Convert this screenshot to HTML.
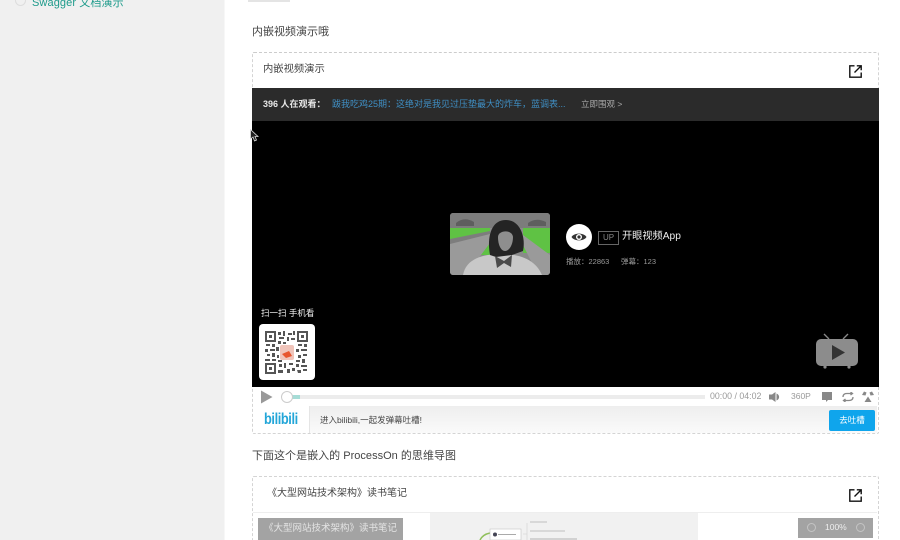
<!DOCTYPE html>
<html lang="zh">
<head>
<meta charset="utf-8">
<style>
html,body{margin:0;padding:0;background:#fff}
#p{position:relative;width:900px;height:540px;overflow:hidden;background:#fff;font-family:"Liberation Sans","Noto Sans CJK SC",sans-serif;color:#333}
#p div,#p span,#p svg{position:absolute;white-space:nowrap}
.t{line-height:1}
</style>
</head>
<body>
<div id="p">
  <div style="left:0;top:0;width:224px;height:540px;background:#f0f0f0"></div>
  <div style="left:224px;top:0;width:1px;height:540px;background:#f7f7f7"></div>
  <div style="left:15px;top:-5px;width:9px;height:9px;border:1px solid #ddd;border-radius:50%"></div>
  <div class="t" style="left:32px;top:-2px;font-size:11px;letter-spacing:.1px;color:#1c9a8a">Swagger 文档演示</div>
  <div style="left:248px;top:0;width:42px;height:2px;background:#e4e4e4"></div>

  <div class="t" style="left:252px;top:27px;font-size:11px;color:#444">内嵌视频演示哦</div>

  <div style="left:252px;top:52px;width:625px;height:380px;border:1px dashed #d4d4d4;border-top-color:#ccc;border-radius:2px"></div>
  <div class="t" style="left:263px;top:65px;font-size:10.3px;color:#444">内嵌视频演示</div>
  <svg style="left:849px;top:65px" width="13" height="13" viewBox="0 0 13 13" fill="none" stroke="#111" stroke-width="1.4"><path d="M5.5 .8H.8V12.2H12.2V7.5"/><path d="M5.5 7.5L12 1M7.8 .8H12.2V5.2"/></svg>

  <div style="left:252px;top:88px;width:627px;height:33px;background:#2b2b2b"></div>
  <div class="t" style="left:263px;top:100px;font-size:9px;font-weight:bold;color:#e8e8e8">396 人在观看：</div>
  <div class="t" style="left:332px;top:100px;font-size:9px;color:#3f8fc4">跋我吃鸡25期：这绝对是我见过压垫最大的炸车，蓝调表...</div>
  <div class="t" style="left:581px;top:100px;font-size:8.5px;color:#aaa">立即围观 &gt;</div>

  <div style="left:252px;top:121px;width:627px;height:266px;background:#000"></div>
  <svg style="left:250px;top:129px" width="9" height="13" viewBox="0 0 9 13"><path d="M.5 .5V10L3 8L4.5 12L6.5 11L5 7.5H8Z" fill="#222" stroke="#ddd" stroke-width=".8"/></svg>

  <!-- thumbnail -->
  <svg style="left:450px;top:213px;border-radius:3px" width="100" height="62" viewBox="0 0 100 62">
    <rect width="100" height="62" fill="#8a8a8a"/>
    <path d="M0 0H100V15H0Z" fill="#7c7c7c"/>
    <path d="M6 10Q14 3 24 9L24 13H6ZM78 10Q86 4 96 9V13H78Z" fill="#5e5e5e"/>
    <path d="M0 15H40V42H0Z" fill="#5fc244"/>
    <path d="M100 15H73V40H100Z" fill="#5fc244"/>
    <path d="M0 30L40 20L40 30L16 62H0Z" fill="#9a9a9a"/>
    <path d="M0 26L40 18V21L0 31Z" fill="#7d7d7d"/>
    <path d="M100 42L73 22V32L88 62H100Z" fill="#9a9a9a"/>
    <path d="M13 62C16 46 32 41 52 41C72 41 86 48 92 62Z" fill="#c8c8c8"/>
    <path d="M40 42C37 26 40 7 56 7C70 7 76 24 73 38L62 42L46 44Z" fill="#242424"/>
    <path d="M48 24C48 17 62 16 63 24C63 32 59 38 55 38C51 38 48 32 48 24Z" fill="#8e8e8e"/>
    <path d="M45 43L54 48L62 42L61 54L54 50L47 55Z" fill="#4a4a4a"/>
  </svg>

  <div style="left:566px;top:224px;width:26px;height:26px;border-radius:50%;background:#fff"></div>
  <svg style="left:571px;top:231px" width="16" height="12" viewBox="0 0 16 12"><path d="M.5 6C3 1.500 13 1.500 15.500 6C13 10.500 3 10.500 .5 6Z" fill="#333"/><circle cx="8" cy="6" r="3" fill="#fff"/><circle cx="8" cy="6" r="1.600" fill="#333"/></svg>
  <div class="t" style="left:598px;top:231px;width:19px;height:12px;border:1px solid #666;font-size:8px;line-height:12px;text-align:center;color:#888">UP</div>
  <div class="t" style="left:622px;top:232px;font-size:10.2px;color:#eee">开眼视频App</div>
  <div class="t" style="left:566px;top:258px;font-size:7.5px;color:#999">播放：22863</div>
  <div class="t" style="left:621px;top:258px;font-size:7.5px;color:#999">弹幕：123</div>

  <div class="t" style="left:261px;top:309px;font-size:8.5px;color:#f2f2f2">扫一扫 手机看</div>
  <div style="left:259px;top:324px;width:56px;height:56px;background:#fff;border-radius:4px"></div>
  <svg style="left:265px;top:331px" width="43" height="43" viewBox="0 0 43 43">
    <g fill="#555">
      <path d="M0 0h11v11H0ZM2 2v7h7V2ZM4 4h3v3H4Z" fill-rule="evenodd"/>
      <path d="M32 0h11v11H32ZM34 2v7h7V2ZM36 4h3v3h-3Z" fill-rule="evenodd"/>
      <path d="M0 32h11v11H0ZM2 34v7h7v-7ZM4 36h3v3H4Z" fill-rule="evenodd"/>
      <path d="M13 1h3v3h-3ZM18 0h2v5h-2ZM23 2h4v2h-4ZM28 0h2v4h-2ZM14 6h5v2h-5ZM22 6h2v4h-2ZM26 7h4v2h-4ZM13 10h3v3h-3ZM1 13h4v2H1ZM7 13h3v3H7ZM18 11h3v2h-3ZM33 13h4v2h-4ZM39 13h3v3h-3ZM0 18h3v3H0ZM5 18h5v2H5ZM11 16h3v4h-3ZM31 18h3v3h-3ZM36 18h6v2h-6ZM2 23h3v2H2ZM7 22h3v4H7ZM12 24h2v3h-2ZM33 24h3v3h-3ZM38 23h4v2h-4ZM0 28h5v2H0ZM7 28h4v2H7ZM13 29h4v2h-4ZM31 29h4v2h-4ZM37 28h3v4h-3ZM14 33h3v3h-3ZM19 32h2v5h-2ZM24 32h4v2h-4ZM31 33h3v3h-3ZM36 34h6v2h-6ZM13 39h5v3h-5ZM22 38h3v4h-3ZM27 37h3v3h-3ZM32 39h4v3h-3ZM38 38h4v2h-4Z"/>
    </g>
    <rect x="15" y="14" width="14" height="15" rx="2" fill="#f0c4ba"/>
    <path d="M17 23L24 20L27 25L21 27Z" fill="#e8552e"/>
  </svg>

  <svg style="left:815px;top:333px" width="44" height="36" viewBox="0 0 44 36">
    <path d="M14 6L9 1M28 6L33 1" stroke="#888" stroke-width="1.400"/>
    <rect x="1" y="6" width="42" height="27" rx="5" fill="#8c8c8c"/>
    <circle cx="10" cy="34" r="1.600" fill="#8c8c8c"/><circle cx="34" cy="34" r="1.600" fill="#8c8c8c"/>
    <path d="M17 12L30 19.500L17 27Z" fill="#333"/>
  </svg>

  <!-- control bar -->
  <svg style="left:260px;top:390px" width="13" height="14" viewBox="0 0 13 14"><path d="M1 .5L12.500 7L1 13.500Z" fill="#999"/></svg>
  <div style="left:287px;top:395px;width:418px;height:4px;background:#ececec"></div>
  <div style="left:287px;top:395px;width:13px;height:4px;background:#a6dcd6"></div>
  <div style="left:281px;top:391px;width:10px;height:10px;border:1px solid #ccc;border-radius:50%;background:#fff"></div>
  <div class="t" style="left:710px;top:392px;font-size:8.8px;color:#999">00:00 / 04:02</div>
  <svg style="left:769px;top:392px" width="11" height="10" viewBox="0 0 11 10"><path d="M0 2.500H3L6.500 0V10L3 7.500H0Z" fill="#888"/><path d="M7.500 1.500C11 3 11 7 7.500 8.500Z" fill="#888"/></svg>
  <div class="t" style="left:791px;top:392px;font-size:8.500px;color:#999">360P</div>
  <svg style="left:822px;top:392px" width="10" height="10" viewBox="0 0 10 10"><path d="M0 0H10V8H6L4 10V8H0Z" fill="#888"/></svg>
  <svg style="left:842px;top:392px" width="12" height="10" viewBox="0 0 12 10" fill="none" stroke="#888" stroke-width="1.300"><path d="M1 5C1 2 3 1.500 5 1.500H10M8.500 0L10.500 1.500L8.500 3M11 5C11 8 9 8.500 7 8.500H2M3.500 7L1.500 8.500L3.500 10"/></svg>
  <svg style="left:862px;top:391px" width="12" height="11" viewBox="0 0 12 11" fill="#888"><path d="M0 4L2 0.500L4.500 1.500L3.500 4.500ZM12 4L10 .5L7.500 1.500L8.500 4.500ZM6 5.500L9.500 11H2.500Z"/></svg>

  <div style="left:253px;top:406px;width:624px;height:27px;background:linear-gradient(#eeeeee,#fafafa)"></div>
  <div style="left:253px;top:406px;width:56px;height:27px;background:#fff;border-right:1px solid #e5e5e5"></div>
  <div class="t" style="left:264px;top:412px;font-size:16px;font-weight:bold;letter-spacing:-.5px;color:#23a6d8;transform-origin:0 0;transform:scaleX(.8)">bilibili</div>
  <div class="t" style="left:320px;top:416px;font-size:8.500px;color:#444">进入bilibili,一起发弹幕吐槽!</div>
  <div class="t" style="left:829px;top:410px;width:46px;height:21px;border-radius:2px;background:#0fa5ec;color:#fff;font-size:8.500px;line-height:21px;text-align:center">去吐槽</div>

  <div class="t" style="left:252px;top:451px;font-size:11px;letter-spacing:.02px;color:#444">下面这个是嵌入的 ProcessOn 的思维导图</div>

  <div style="left:252px;top:476px;width:625px;height:80px;border:1px dashed #d4d4d4;border-radius:2px"></div>
  <div class="t" style="left:267px;top:489px;font-size:10px;color:#444">《大型网站技术架构》读书笔记</div>
  <svg style="left:849px;top:489px" width="13" height="13" viewBox="0 0 13 13" fill="none" stroke="#111" stroke-width="1.400"><path d="M5.500 .8H.8V12.200H12.200V7.500"/><path d="M5.500 7.500L12 1M7.800 .8H12.200V5.200"/></svg>
  <div style="left:253px;top:512px;width:624px;height:1px;background:#eee"></div>

  <div style="left:430px;top:513px;width:268px;height:27px;background:#f1f1f1"></div>
  <div class="t" style="left:258px;top:518px;width:145px;height:22px;background:#a3a3a3;color:#e4e4e4;font-size:9.500px;line-height:21px;text-align:center">《大型网站技术架构》读书笔记</div>
  <div style="left:798px;top:518px;width:75px;height:20px;background:#a3a3a3"></div>
  <div style="left:807px;top:523px;width:7px;height:7px;border:1px solid #c4c4c4;border-radius:50%"></div>
  <div class="t" style="left:825px;top:523px;font-size:8.500px;color:#eee">100%</div>
  <div style="left:856px;top:523px;width:7px;height:7px;border:1px solid #c4c4c4;border-radius:50%"></div>

  <svg style="left:478px;top:518px" width="110" height="22" viewBox="0 0 110 22" fill="none">
    <path d="M2 22C4 18 7 16 12 15" stroke="#8fbf5a" stroke-width="1.500"/>
    <rect x="12" y="11" width="31" height="11" fill="#fff" stroke="#c4c4c4" stroke-width=".6"/>
    <circle cx="17" cy="16.500" r="2" fill="#445"/>
    <path d="M20 16.500H38" stroke="#aaa"/>
    <path d="M45 16H49M49 5V22" stroke="#d0d0d0" stroke-width=".6"/>
    <path d="M52 4H69" stroke="#c0c0c0"/><path d="M52 13H87" stroke="#c0c0c0"/><path d="M52 21H99" stroke="#b4b4b4"/>
  </svg>
</div>
</body>
</html>
